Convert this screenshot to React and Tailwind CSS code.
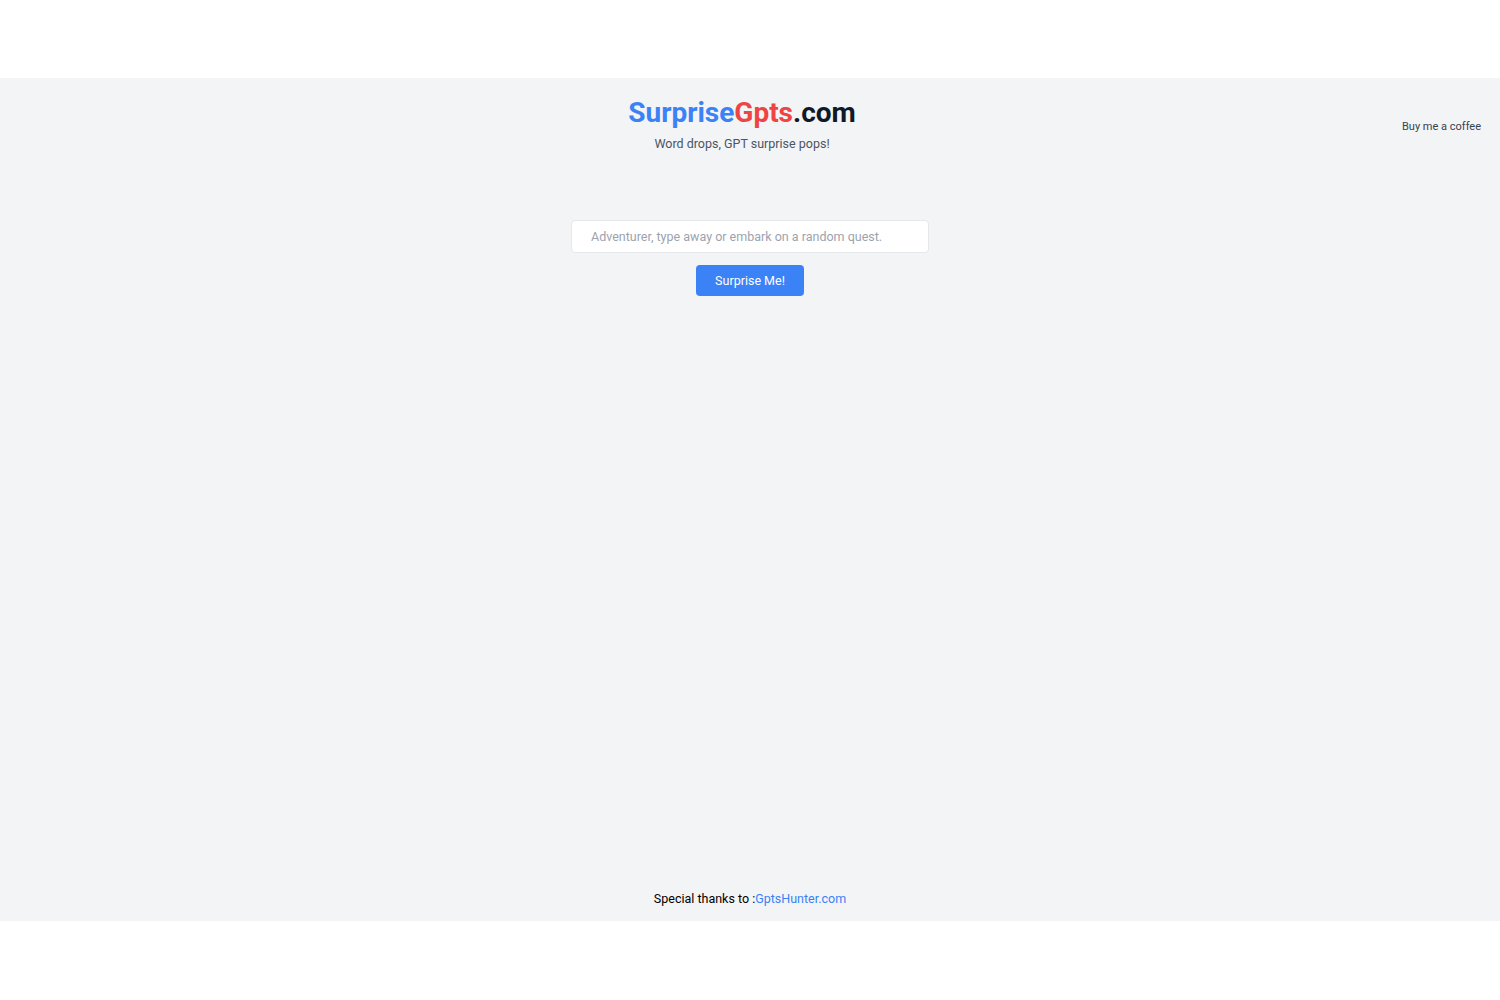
export default function App() {
  return (
    <div className="bg-white pt-[78px] pb-[79px] font-['Roboto','Liberation_Sans',sans-serif]">
      <div className="flex h-[843px] flex-col bg-[#f3f4f6]">
        {/* header */}
        <header className="flex items-center px-[19px] pt-[17px]">
          <div className="flex-1" />
          <div className="mr-4 text-center">
            <h1 className="text-[28px] leading-9 font-bold">
              <span className="text-[#3b82f6]">Surprise</span>
              <span className="text-[#ef4444]">Gpts</span>
              <span className="text-[#111827]">.com</span>
            </h1>
            <p className="mt-[3px] text-[12.5px] leading-5 text-[#4b5563]">Word drops, GPT surprise pops!</p>
          </div>
          <div className="flex flex-1 justify-end">
            <a href="#" className="mt-[5px] text-[11px] text-[#374151]">
              Buy me a coffee
            </a>
          </div>
        </header>

        {/* search */}
        <main className="mt-[66px] flex flex-col items-center">
          <input
            type="text"
            placeholder="Adventurer, type away or embark on a random quest."
            className="h-[33px] w-[358px] rounded border border-[#e5e7eb] bg-white px-[19px] text-[12.5px] text-[#374151] placeholder:text-[#9ca3af] outline-none"
          />
          <button className="mt-3 h-[31px] w-[108px] rounded bg-[#3b82f6] pt-px text-[12.5px] text-white">
            Surprise Me!
          </button>
        </main>

        <footer className="mt-auto pb-[12px] text-center text-[12.5px] leading-5 text-black">
          Special thanks to :
          <a href="#" className="text-[#3b82f6]">
            GptsHunter.com
          </a>
        </footer>
      </div>
    </div>
  );
}
